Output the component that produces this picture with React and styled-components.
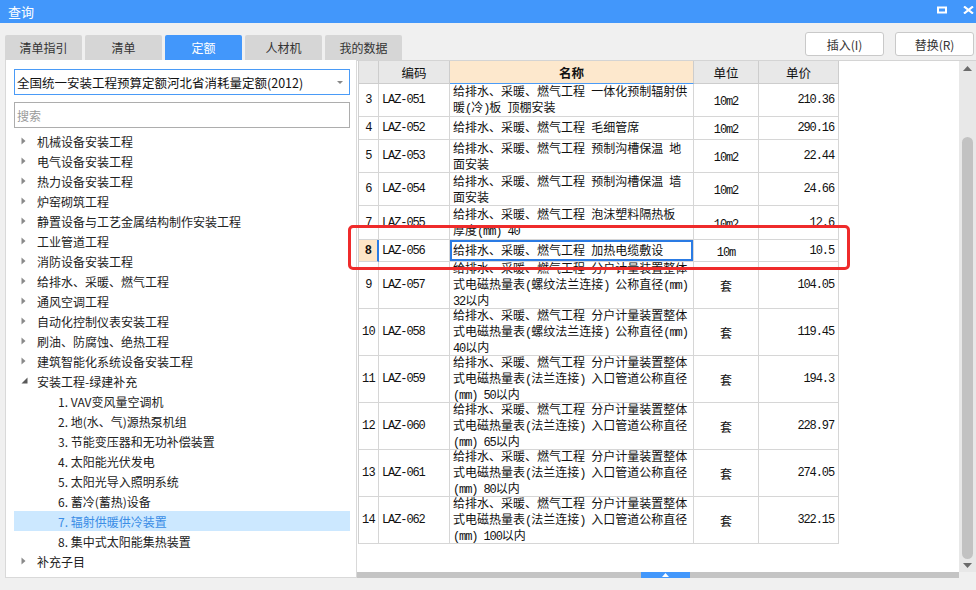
import React from "react";
import styled, { createGlobalStyle } from "styled-components";

const GlobalStyle = createGlobalStyle`
  body {
    margin: 0;
    background: #f0f0f0;
    font-family: "Noto Sans CJK SC", "Noto Sans", sans-serif;
  }
`;

const tabs = ["清单指引", "清单", "定额", "人材机", "我的数据"];

const tree = [
  { label: "机械设备安装工程", level: 0, arrow: "closed" },
  { label: "电气设备安装工程", level: 0, arrow: "closed" },
  { label: "热力设备安装工程", level: 0, arrow: "closed" },
  { label: "炉窑砌筑工程", level: 0, arrow: "closed" },
  { label: "静置设备与工艺金属结构制作安装工程", level: 0, arrow: "closed" },
  { label: "工业管道工程", level: 0, arrow: "closed" },
  { label: "消防设备安装工程", level: 0, arrow: "closed" },
  { label: "给排水、采暖、燃气工程", level: 0, arrow: "closed" },
  { label: "通风空调工程", level: 0, arrow: "closed" },
  { label: "自动化控制仪表安装工程", level: 0, arrow: "closed" },
  { label: "刷油、防腐蚀、绝热工程", level: 0, arrow: "closed" },
  { label: "建筑智能化系统设备安装工程", level: 0, arrow: "closed" },
  { label: "安装工程-绿建补充", level: 0, arrow: "open" },
  { label: "1. VAV变风量空调机", level: 1 },
  { label: "2. 地(水、气)源热泵机组", level: 1 },
  { label: "3. 节能变压器和无功补偿装置", level: 1 },
  { label: "4. 太阳能光伏发电", level: 1 },
  { label: "5. 太阳光导入照明系统", level: 1 },
  { label: "6. 蓄冷(蓄热)设备", level: 1 },
  { label: "7. 辐射供暖供冷装置", level: 1, selected: true },
  { label: "8. 集中式太阳能集热装置", level: 1 },
  { label: "补充子目", level: 0, arrow: "closed" },
];

const P = "给排水、采暖、燃气工程 ";
const rows = [
  { no: 3, code: "LAZ-051", name: [P + "一体化预制辐射供", "暖(冷)板 顶棚安装"], unit: "10m2", price: "210.36", h: 33 },
  { no: 4, code: "LAZ-052", name: [P + "毛细管席"], unit: "10m2", price: "290.16", h: 23 },
  { no: 5, code: "LAZ-053", name: [P + "预制沟槽保温 地", "面安装"], unit: "10m2", price: "22.44", h: 33 },
  { no: 6, code: "LAZ-054", name: [P + "预制沟槽保温 墙", "面安装"], unit: "10m2", price: "24.66", h: 33 },
  { no: 7, code: "LAZ-055", name: [P + "泡沫塑料隔热板", "厚度(mm) 40"], unit: "10m2", price: "12.6", h: 34 },
  { no: 8, code: "LAZ-056", name: [P + "加热电缆敷设"], unit: "10m", price: "10.5", h: 22, current: true },
  { no: 9, code: "LAZ-057", name: [P + "分户计量装置整体", "式电磁热量表(螺纹法兰连接) 公称直径(mm)", "32以内"], unit: "套", price: "104.05", h: 47 },
  { no: 10, code: "LAZ-058", name: [P + "分户计量装置整体", "式电磁热量表(螺纹法兰连接) 公称直径(mm)", "40以内"], unit: "套", price: "119.45", h: 47 },
  { no: 11, code: "LAZ-059", name: [P + "分户计量装置整体", "式电磁热量表(法兰连接) 入口管道公称直径", "(mm) 50以内"], unit: "套", price: "194.3", h: 47 },
  { no: 12, code: "LAZ-060", name: [P + "分户计量装置整体", "式电磁热量表(法兰连接) 入口管道公称直径", "(mm) 65以内"], unit: "套", price: "228.97", h: 47 },
  { no: 13, code: "LAZ-061", name: [P + "分户计量装置整体", "式电磁热量表(法兰连接) 入口管道公称直径", "(mm) 80以内"], unit: "套", price: "274.05", h: 47 },
  { no: 14, code: "LAZ-062", name: [P + "分户计量装置整体", "式电磁热量表(法兰连接) 入口管道公称直径", "(mm) 100以内"], unit: "套", price: "322.15", h: 47 },
];

// half-width runs get the narrow mono treatment, like the old bitmap font
const splitRuns = (text) => text.match(/[\x20-\x7e]+|[^\x20-\x7e]+/g) || [];

const Line = ({ text }) => (
  <div>
    {splitRuns(text).map((part, i) =>
      /^[\x20-\x7e]+$/.test(part) ? <Half key={i}>{part}</Half> : <span key={i}>{part}</span>
    )}
  </div>
);

const App = () => {
  return (
    <>
      <GlobalStyle />
      <Window>
        <TitleBar>
          <Title>查询</Title>
          <WinButtons>
            <svg width="10" height="8" viewBox="0 0 10 8">
              <rect x="1" y="1.5" width="8" height="5" fill="none" stroke="#fff" strokeWidth="2" />
            </svg>
            <svg width="11" height="8" viewBox="0 0 11 8">
              <path d="M1 0.5 L10 7.5 M10 0.5 L1 7.5" stroke="#fff" strokeWidth="2.2" />
            </svg>
          </WinButtons>
        </TitleBar>

        <TopRow>
          <Tabs>
            {tabs.map((t) => (
              <Tab key={t} active={t === "定额"}>
                {t}
              </Tab>
            ))}
          </Tabs>
          <Actions>
            <ActionButton>插入(I)</ActionButton>
            <ActionButton>替换(R)</ActionButton>
          </Actions>
        </TopRow>

        <Body>
          <LeftPanel>
            <Select>
              <span>全国统一安装工程预算定额河北省消耗量定额(2012)</span>
              <Caret />
            </Select>
            <Search placeholder="搜索" />
            <Tree>
              {tree.map((n) => (
                <TreeRow key={n.label} level={n.level} selected={n.selected}>
                  {n.arrow === "closed" && (
                    <Arrow width="5" height="8" viewBox="0 0 5 8">
                      <path d="M0.5 0.5 L4.5 4 L0.5 7.5 Z" fill="#8a8a8a" />
                    </Arrow>
                  )}
                  {n.arrow === "open" && (
                    <Arrow width="7" height="7" viewBox="0 0 7 7">
                      <path d="M6.5 0.5 L6.5 6.5 L0.5 6.5 Z" fill="#595959" />
                    </Arrow>
                  )}
                  {n.label}
                </TreeRow>
              ))}
            </Tree>
          </LeftPanel>

          <RightPanel>
            <Main>
              <TableArea>
                <Grid>
                  <HeadRow>
                    <HeadCell />
                    <HeadCell>编码</HeadCell>
                    <HeadCell accent>名称</HeadCell>
                    <HeadCell>单位</HeadCell>
                    <HeadCell>单价</HeadCell>
                  </HeadRow>
                  {rows.map((r) => (
                    <Row key={r.no} style={{ height: r.h }}>
                      <NoCell current={r.current}>{r.no}</NoCell>
                      <CodeCell>{r.code}</CodeCell>
                      <NameCell current={r.current}>
                        {r.name.map((l) => (
                          <Line key={l} text={l} />
                        ))}
                      </NameCell>
                      <UnitCell>
                        <Line text={r.unit} />
                      </UnitCell>
                      <PriceCell>{r.price}</PriceCell>
                    </Row>
                  ))}
                </Grid>
              </TableArea>
              <VScroll>
                <ScrollArrow width="9" height="5" viewBox="0 0 9 5">
                  <path d="M0 5 L4.5 0 L9 5 Z" fill="#6b6b6b" />
                </ScrollArrow>
                <Track>
                  <Thumb />
                </Track>
                <ScrollArrow width="9" height="5" viewBox="0 0 9 5">
                  <path d="M0 0 L4.5 5 L9 0 Z" fill="#6b6b6b" />
                </ScrollArrow>
              </VScroll>
            </Main>
            <HBar>
              <Collapse>
                <svg width="7" height="4" viewBox="0 0 7 4">
                  <path d="M0 4 L3.5 0 L7 4 Z" fill="#fff" />
                </svg>
              </Collapse>
            </HBar>
          </RightPanel>
        </Body>

        <Mark />
      </Window>
    </>
  );
};

const Window = styled.div`
  position: relative;
  width: 976px;
  height: 590px;
  display: flex;
  flex-direction: column;
  background: #f0f0f0;
  overflow: hidden;
`;

const TitleBar = styled.div`
  height: 23px;
  background: #4297fb;
  display: flex;
  align-items: center;
  justify-content: space-between;
  padding: 0 2px 0 8px;
`;

const Title = styled.div`
  color: #fff;
  font-size: 13px;
`;

const WinButtons = styled.div`
  display: flex;
  align-items: center;
  gap: 16px;
  margin-top: -4px;
`;

const TopRow = styled.div`
  height: 37px;
  display: flex;
  justify-content: space-between;
  align-items: flex-end;
  padding: 0 2px 0 5px;
`;

const Tabs = styled.div`
  display: flex;
  gap: 3px;
`;

const Tab = styled.div`
  width: 77px;
  height: 25px;
  display: flex;
  align-items: center;
  justify-content: center;
  font-size: 12px;
  border-radius: 2px 2px 0 0;
  background: ${(p) => (p.active ? "#4297fb" : "#d6d6d6")};
  color: ${(p) => (p.active ? "#fff" : "#333")};
`;

const Actions = styled.div`
  align-self: flex-start;
  margin-top: 9px;
  display: flex;
  gap: 11px;
`;

const ActionButton = styled.button`
  width: 79px;
  height: 24px;
  background: #fff;
  border: 1px solid #c9c9c9;
  border-radius: 3px;
  font-family: "Noto Sans CJK SC", sans-serif;
  font-size: 12px;
  color: #333;
  padding: 0;
`;

const Body = styled.div`
  height: 518px;
  display: flex;
  padding-left: 5px;
`;

const LeftPanel = styled.div`
  width: 352px;
  box-sizing: border-box;
  background: #fff;
  border: 1px solid #d9d9d9;
  border-top: none;
  padding: 9px 6px 0 8px;
  display: flex;
  flex-direction: column;
`;

const Select = styled.div`
  height: 26px;
  box-sizing: border-box;
  border: 1px solid #4a9bf7;
  display: flex;
  align-items: center;
  justify-content: space-between;
  padding: 0 6px 0 2px;
  font-size: 12.5px;
  color: #111;
`;

const Caret = styled.span`
  width: 0;
  height: 0;
  border-left: 3px solid transparent;
  border-right: 3px solid transparent;
  border-top: 3px solid #888;
`;

const Search = styled.input`
  margin-top: 7px;
  height: 26px;
  box-sizing: border-box;
  border: 1px solid #adadad;
  outline: none;
  padding: 0 2px;
  font-family: "Noto Sans CJK SC", sans-serif;
  font-size: 12px;
  &::placeholder {
    color: #9a9a9a;
  }
`;

const Tree = styled.div`
  margin-top: 3px;
  display: flex;
  flex-direction: column;
`;

const TreeRow = styled.div`
  position: relative;
  height: 20px;
  display: flex;
  align-items: center;
  padding-left: ${(p) => (p.level ? 44 : 23)}px;
  font-size: 12px;
  color: ${(p) => (p.selected ? "#3a8de6" : "#222")};
  background: ${(p) => (p.selected ? "#cce8ff" : "transparent")};
  white-space: nowrap;
`;

const Arrow = styled.svg`
  position: absolute;
  left: 7px;
  top: 6px;
`;

const RightPanel = styled.div`
  flex: 1;
  display: flex;
  flex-direction: column;
  border-top: 1px solid #d4d4d4;
`;

const Main = styled.div`
  flex: 1;
  display: flex;
  min-height: 0;
`;

const TableArea = styled.div`
  flex: 1;
  background: #fff;
  padding-left: 1px;
  overflow: hidden;
`;

const Grid = styled.div`
  width: 481px;
  border-left: 1px solid #d0d0d0;
  font-size: 12px;
  color: #111;
`;

const cols = "20px 71px 244px 65px 80px";

const HeadRow = styled.div`
  display: grid;
  grid-template-columns: ${cols};
  height: 23px;
`;

const HeadCell = styled.div`
  box-sizing: border-box;
  display: flex;
  align-items: center;
  justify-content: center;
  font-size: 12.5px;
  background: ${(p) => (p.accent ? "#fde8cd" : "#e8e8e8")};
  font-weight: ${(p) => (p.accent ? 700 : 400)};
  border-right: 1px solid #cdcdcd;
  border-bottom: 1px solid ${(p) => (p.accent ? "#4a9bf7" : "#cdcdcd")};
`;

const Row = styled.div`
  display: grid;
  grid-template-columns: ${cols};
`;

const Cell = styled.div`
  box-sizing: border-box;
  display: flex;
  align-items: center;
  border-right: 1px solid #d6d6d6;
  border-bottom: 1px solid #d6d6d6;
  white-space: nowrap;
  overflow: hidden;
`;

const mono = `"Liberation Mono", "Noto Sans CJK SC", monospace`;

const Half = styled.span`
  font-family: "Liberation Mono", monospace;
  font-size: 12px;
  letter-spacing: -1.1px;
`;

const NoCell = styled(Cell)`
  justify-content: center;
  font-family: ${mono};
  font-size: 12px;
  letter-spacing: -0.8px;
  background: ${(p) => (p.current ? "#fde6c8" : "#fff")};
  font-weight: ${(p) => (p.current ? 700 : 400)};
  border-right: ${(p) => (p.current ? "2px solid #2a7be4" : "1px solid #d6d6d6")};
`;

const CodeCell = styled(Cell)`
  padding-left: 3px;
  font-family: ${mono};
  font-size: 12px;
  letter-spacing: -1.1px;
`;

const NameCell = styled(Cell)`
  flex-direction: column;
  align-items: flex-start;
  justify-content: center;
  padding-left: 3px;
  font-family: "Noto Sans CJK SC", sans-serif;
  font-size: 12px;
  line-height: 14px;
  box-shadow: ${(p) => (p.current ? "inset 0 0 0 2px #2a7be4" : "none")};
`;

const UnitCell = styled(Cell)`
  justify-content: center;
  font-family: "Noto Sans CJK SC", sans-serif;
  font-size: 12px;
`;

const PriceCell = styled(Cell)`
  justify-content: flex-end;
  padding-right: 4px;
  font-family: ${mono};
  font-size: 12px;
  letter-spacing: -1.1px;
`;

const VScroll = styled.div`
  width: 17px;
  background: #e8e8e8;
  display: flex;
  flex-direction: column;
  align-items: center;
  padding: 5px 0 4px;
  box-sizing: border-box;
`;

const ScrollArrow = styled.svg`
  flex: none;
`;

const Track = styled.div`
  flex: 1;
  width: 100%;
  display: flex;
  justify-content: center;
  padding-top: 66px;
  padding-bottom: 4px;
  box-sizing: border-box;
`;

const Thumb = styled.div`
  width: 11px;
  height: 100%;
  border-radius: 6px;
  background: #c2c2c2;
`;

const HBar = styled.div`
  height: 6px;
  margin-right: 17px;
  background: #c4c4c4;
  display: flex;
`;

const Collapse = styled.div`
  margin-left: 284px;
  width: 49px;
  background: #4297fb;
  display: flex;
  align-items: center;
  justify-content: center;
`;

const Mark = styled.div`
  position: absolute;
  left: 348px;
  top: 225px;
  width: 502px;
  height: 45px;
  box-sizing: border-box;
  border: 3px solid #ef2b2b;
  border-radius: 5px;
  pointer-events: none;
`;

export default App;
